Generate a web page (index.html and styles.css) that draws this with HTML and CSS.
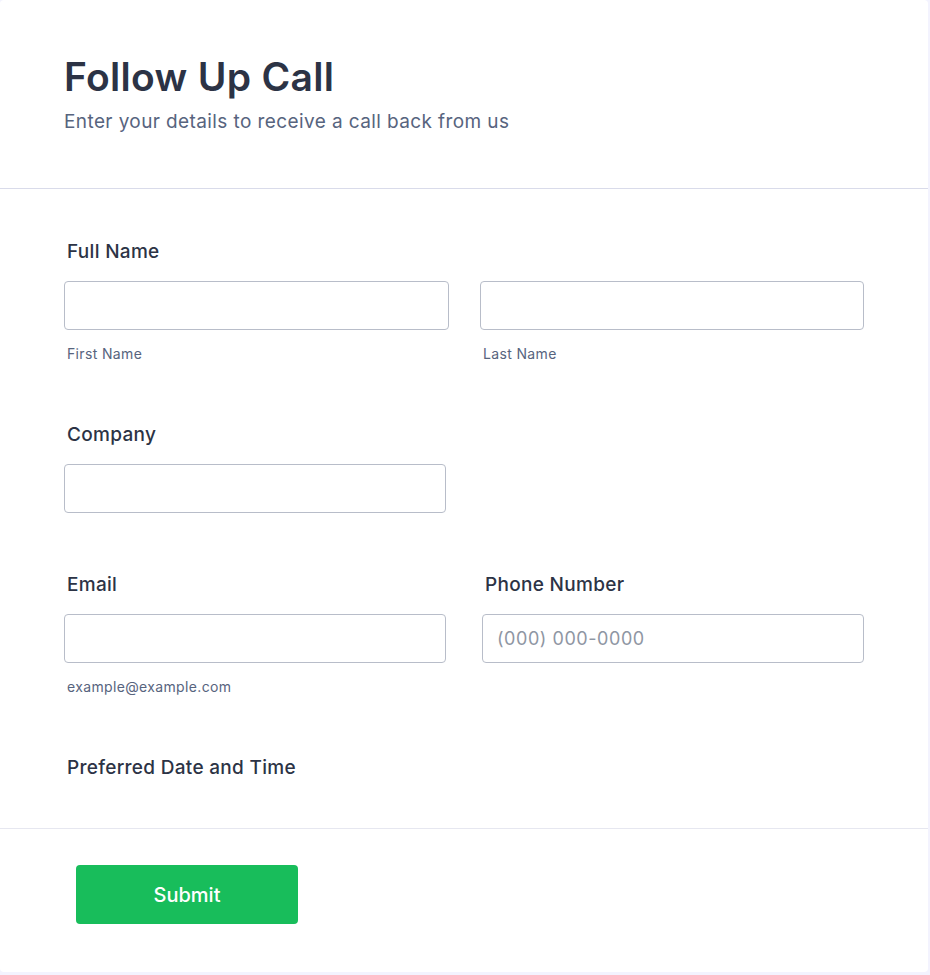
FILE: index.html
```html
<!DOCTYPE html>
<html>
	<head>
		<meta charset="UTF-8">
		<title>Follow Up Call</title>
		<link rel="stylesheet" href="styles.css">
	</head>
	<body>
		<div class="card">
			<div class="header">
				<h1 class="title">Follow Up Call</h1>
				<p class="subtitle">Enter your details to receive a call back from us</p>
			</div>
			<form class="fields">
				<div class="field">
					<label class="label">Full Name</label>
					<div class="row row-name">
						<div>
							<input class="input" type="text">
							<span class="sub">First Name</span>
						</div>
						<div>
							<input class="input" type="text">
							<span class="sub">Last Name</span>
						</div>
					</div>
				</div>
				<div class="field">
					<div class="row">
						<div>
							<label class="label">Company</label>
							<input class="input" type="text">
						</div>
					</div>
				</div>
				<div class="field">
					<div class="row">
						<div>
							<label class="label">Email</label>
							<input class="input" type="text">
							<span class="sub">example@example.com</span>
						</div>
						<div>
							<label class="label">Phone Number</label>
							<input class="input" type="text" placeholder="(000) 000-0000">
						</div>
					</div>
				</div>
				<div class="field field-last">
					<label class="label">Preferred Date and Time</label>
				</div>
			</form>
			<div class="footer">
				<button class="submit" type="button">Submit</button>
			</div>
		</div>
	</body>
</html>
```

FILE: styles.css
```css
*{
	margin: 0;
	padding: 0;
	box-sizing: border-box;
}
body{
	background: #f3f3fe;
	font-family: Inter, "Noto Sans", sans-serif;
	color: #2c3345;
}
.card{
	width: 928px;
	height: 972px;
	background: #fff;
	border-radius: 4px;
}
.header{
	padding: 50px 64px 0;
	height: 189px;
	border-bottom: 1px solid #d9dbea;
}
.title{
	font-size: 39px;
	font-weight: 600;
	line-height: 54px;
	letter-spacing: 0.3px;
}
.subtitle{
	margin-top: 6px;
	font-size: 19px;
	line-height: 24px;
	letter-spacing: 0.4px;
	color: #57647e;
}
.fields{
	padding: 51px 64px 48px;
	border-bottom: 1px solid #e6e7f0;
}
.field{
	margin-bottom: 60px;
}
.field-last{
	margin-bottom: 0;
}
.label{
	display: block;
	padding-left: 3px;
	font-size: 19px;
	font-weight: 500;
	line-height: 24px;
	letter-spacing: 0.3px;
	margin-bottom: 17px;
}
.field-last .label{
	margin-bottom: 0;
}
.row{
	display: grid;
	grid-template-columns: 382px 382px;
	column-gap: 36px;
}
.row-name{
	grid-template-columns: 385px 384px;
	column-gap: 31px;
}
.input{
	display: block;
	width: 100%;
	height: 49px;
	border: 1px solid #b8bdc9;
	border-radius: 4px;
	padding: 0 14px;
	font-family: inherit;
	font-size: 18px;
	letter-spacing: 0.55px;
	color: #2c3345;
	outline: none;
}
.input::placeholder{
	color: #8f96a3;
}
.sub{
	display: block;
	margin-top: 15px;
	padding-left: 3px;
	font-size: 14px;
	line-height: 18px;
	letter-spacing: 0.35px;
	color: #57647e;
}
.footer{
	padding: 36px 76px;
}
.submit{
	width: 222px;
	height: 59px;
	border: none;
	border-radius: 4px;
	background: #18bd5b;
	color: #fff;
	font-family: inherit;
	font-size: 20px;
	font-weight: 500;
}
```
